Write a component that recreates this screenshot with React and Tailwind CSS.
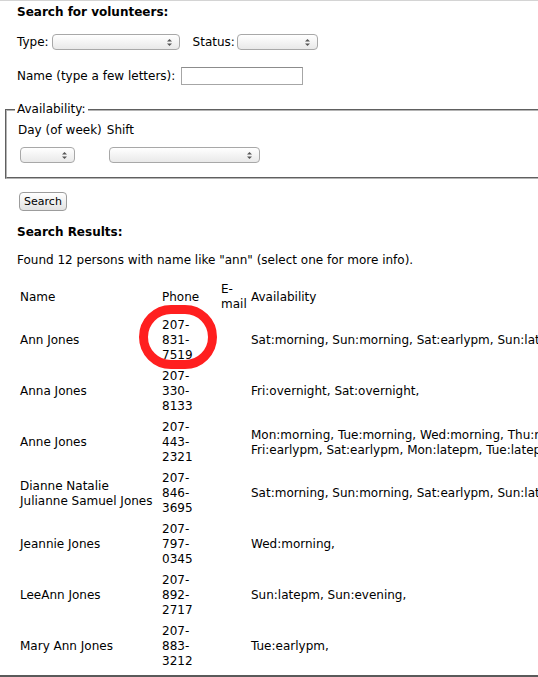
import React from "react";

const people = [
  { name: ["Ann Jones"], phone: ["207-", "831-", "7519"], avail: ["Sat:morning, Sun:morning, Sat:earlypm, Sun:latepm, Sat:evening,"] },
  { name: ["Anna Jones"], phone: ["207-", "330-", "8133"], avail: ["Fri:overnight, Sat:overnight,"] },
  {
    name: ["Anne Jones"],
    phone: ["207-", "443-", "2321"],
    avail: ["Mon:morning, Tue:morning, Wed:morning, Thu:morning,", "Fri:earlypm, Sat:earlypm, Mon:latepm, Tue:latepm,"],
  },
  {
    name: ["Dianne Natalie", "Julianne Samuel Jones"],
    phone: ["207-", "846-", "3695"],
    avail: ["Sat:morning, Sun:morning, Sat:earlypm, Sun:latepm,"],
  },
  { name: ["Jeannie Jones"], phone: ["207-", "797-", "0345"], avail: ["Wed:morning,"] },
  { name: ["LeeAnn Jones"], phone: ["207-", "892-", "2717"], avail: ["Sun:latepm, Sun:evening,"] },
  { name: ["Mary Ann Jones"], phone: ["207-", "883-", "3212"], avail: ["Tue:earlypm,"] },
  { name: ["Mary Anne Jones"], phone: ["207-", "781-", "4470"], avail: ["Mon:evening,"] },
];

function FakeSelect({ width }) {
  return (
    <div
      className={`relative h-[16px] rounded-[4px] border border-[#a8a8a8] bg-linear-to-b from-white to-[#e9e9e9] ${width}`}
    >
      <svg
        className="absolute right-[7px] top-[4px]"
        width="5"
        height="7"
        viewBox="0 0 5 7"
      >
        <path d="M2.5 0 L5 2.6 L0 2.6 Z" fill="#555" />
        <path d="M2.5 7 L5 4.4 L0 4.4 Z" fill="#555" />
      </svg>
    </div>
  );
}

export default function App() {
  return (
    <div className="relative h-[677px] w-[538px] overflow-hidden border-t border-[#d4d4d4] bg-white font-['DejaVu_Sans',Verdana,sans-serif] text-[12px] leading-[15px] text-black">
      <div className="pl-[17px] pt-[4px]">
        <h1 className="font-bold">Search for volunteers:</h1>

        <div className="mt-[13px] flex h-[18px] items-center">
          <span>Type:</span>
          <FakeSelect width="w-[128px] ml-[3px]" />
          <span className="ml-[13px]">Status:</span>
          <FakeSelect width="w-[81px] ml-[2px]" />
        </div>

        <div className="mt-[16px] flex h-[18px] items-center">
          <span>Name (type a few letters):</span>
          <div className="ml-[6px] h-[18px] w-[122px] border border-[#a6a6a6] border-t-[#8c8c8c] bg-white" />
        </div>
      </div>

      <fieldset className="ml-[5px] mt-[17px] w-[600px] border-2 border-[#b4b4b4] pb-[14px] pl-[8px] [border-style:groove]">
        <legend className="px-[2px]">Availability:</legend>
        <div className="ml-[3px] mt-[6px] flex">
          <span>Day (of week)</span>
          <span className="ml-[5px]">Shift</span>
        </div>
        <div className="ml-[5px] mt-[9px] flex">
          <FakeSelect width="w-[55px]" />
          <FakeSelect width="w-[151px] ml-[34px]" />
        </div>
      </fieldset>

      <div className="pl-[19px] pt-[13px]">
        <button className="h-[19px] w-[48px] rounded-[4px] border border-[#9c9c9c] bg-linear-to-b from-white to-[#e2e2e2] text-[11px] leading-[14px]">
          Search
        </button>
      </div>

      <div className="pl-[17px]">
        <h2 className="mt-[14px] font-bold">Search Results:</h2>
        <p className="mt-[13px]">
          Found 12 persons with name like "ann" (select one for more info).
        </p>

        <table className="mt-[11px] w-[631px] table-fixed border-collapse">
          <colgroup>
            <col className="w-[142px]" />
            <col className="w-[59px]" />
            <col className="w-[30px]" />
            <col className="w-[400px]" />
          </colgroup>
          <thead>
            <tr>
              <th className="p-[3px] text-left align-middle font-normal">Name</th>
              <th className="p-[3px] text-left align-middle font-normal">Phone</th>
              <th className="p-[3px] text-left align-middle font-normal">
                <span className="block">E-</span>
                <span className="block">mail</span>
              </th>
              <th className="p-[3px] text-left align-middle font-normal">Availability</th>
            </tr>
          </thead>
          <tbody>
            {people.map((p) => (
              <tr key={p.name.join(" ")}>
                <td className="p-[3px] align-middle">
                  {p.name.map((n) => (
                    <span key={n} className="block whitespace-nowrap">
                      {n}
                    </span>
                  ))}
                </td>
                <td className="p-[3px] align-middle">
                  {p.phone.map((n, i) => (
                    <span key={i} className="block whitespace-nowrap">
                      {n}
                    </span>
                  ))}
                </td>
                <td className="p-[3px]" />
                <td className="p-[3px] align-middle">
                  {p.avail.map((n) => (
                    <span key={n} className="block whitespace-nowrap">
                      {n}
                    </span>
                  ))}
                </td>
              </tr>
            ))}
          </tbody>
        </table>
      </div>

      {/* red annotation ring around the first phone number */}
      <div className="absolute left-[139px] top-[304px] h-[64px] w-[78px] rounded-full border-[9px] border-[#ff1f1f]" />

      <div className="absolute bottom-0 left-0 h-[2px] w-full bg-[#5a5a5a]" />
    </div>
  );
}
